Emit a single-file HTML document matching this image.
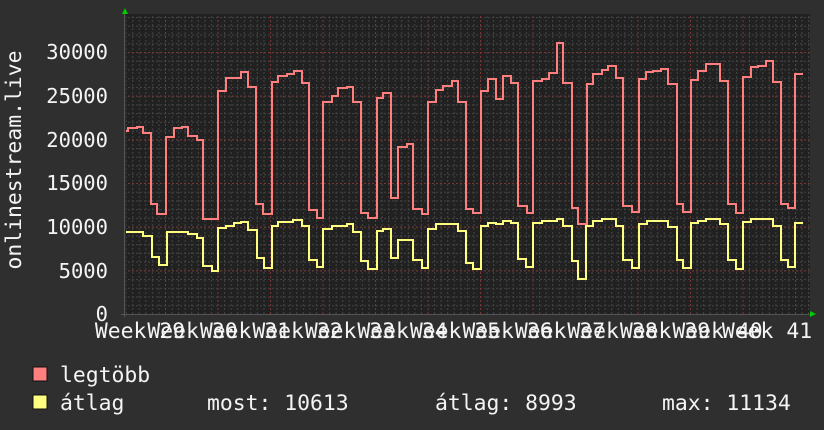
<!DOCTYPE html>
<html><head><meta charset="utf-8"><style>
html,body{margin:0;padding:0;background:#2f2f2f;width:824px;height:430px;overflow:hidden}
svg{display:block}
text{font-family:"DejaVu Sans Mono","Liberation Mono",monospace;font-size:20.5px;fill:#f4f4f4}
text.lg{font-size:21.4px}
</style></head><body>
<svg width="824" height="430" viewBox="0 0 824 430" xmlns="http://www.w3.org/2000/svg">
<defs>
<pattern id="gv" patternUnits="userSpaceOnUse" x="165" y="0" width="6.5625" height="4">
<rect x="0" y="0" width="1" height="2" fill="#444"/></pattern>
<pattern id="gh" patternUnits="userSpaceOnUse" x="0" y="314" width="4" height="8.733">
<rect x="0" y="0" width="2" height="1" fill="#444"/></pattern>
<pattern id="rv" patternUnits="userSpaceOnUse" x="165" y="0" width="52.5" height="4">
<rect x="0" y="0" width="1" height="2" fill="#7a3535"/></pattern>
<pattern id="rh" patternUnits="userSpaceOnUse" x="0" y="314" width="4" height="43.667">
<rect x="0" y="0" width="2" height="1" fill="#7a3535"/></pattern>
</defs>
<rect x="124" y="14" width="686" height="300" fill="#212121"/>
<rect x="124" y="14" width="686" height="300" fill="url(#gv)"/>
<rect x="124" y="14" width="686" height="300" fill="url(#gh)"/>
<rect x="124" y="14" width="686" height="300" fill="url(#rv)"/>
<rect x="124" y="14" width="686" height="300" fill="url(#rh)"/>
<rect x="124" y="14" width="2" height="300" fill="#2c2c2c"/>
<line x1="121" y1="314.5" x2="812" y2="314.5" stroke="#555" stroke-width="1"/>
<line x1="124.5" y1="12" x2="124.5" y2="317" stroke="#555" stroke-width="1"/>
<polygon points="122,14 128,14 125,8" fill="#00cc00"/>
<polygon points="810,311 810,317 816,314" fill="#00cc00"/>

<polyline fill="none" stroke="#ff7f7f" stroke-width="2" points="126,131 128,131 128,128 137,128 137,127 143,127 143,133 151,133 151,204 157,204 157,214 166,214 166,137 174,137 174,128 182,128 182,127 188,127 188,136 197,136 197,140 203,140 203,219 218,219 218,91 226,91 226,78 241,78 241,72 248,72 248,87 256,87 256,204 263,204 263,214 272,214 272,82 278,82 278,76 287,76 287,74 294,74 294,71 302,71 302,83 309,83 309,210 317,210 317,218 323,218 323,102 332,102 332,96 338,96 338,88 347,88 347,87 353,87 353,102 361,102 361,213 368,213 368,218 377,218 377,98 383,98 383,93 391,93 391,198 398,198 398,147 407,147 407,144 413,144 413,209 422,209 422,214 428,214 428,102 436,102 436,90 443,90 443,86 452,86 452,81 458,81 458,102 466,102 466,209 473,209 473,213 481,213 481,91 488,91 488,79 496,79 496,99 503,99 503,76 511,76 511,83 518,83 518,206 527,206 527,213 533,213 533,81 542,81 542,79 549,79 549,73 557,73 557,43 563,43 563,83 572,83 572,208 578,208 578,224 587,224 587,84 593,84 593,74 602,74 602,70 608,70 608,66 616,66 616,78 623,78 623,206 632,206 632,212 639,212 639,79 646,79 646,72 653,72 653,71 661,71 661,69 668,69 668,84 677,84 677,204 683,204 683,212 691,212 691,80 698,80 698,71 706,71 706,64 720,64 720,81 728,81 728,204 736,204 736,213 743,213 743,77 751,77 751,67 758,67 758,66 766,66 766,61 773,61 773,82 781,82 781,204 788,204 788,208 795,208 795,74 803,74"/>
<polyline fill="none" stroke="#ffff7f" stroke-width="2" points="126,232 143,232 143,236 152,236 152,257 159,257 159,265 167,265 167,232 188,232 188,234 197,234 197,238 203,238 203,266 212,266 212,271 218,271 218,228 226,228 226,226 234,226 234,223 241,223 241,222 248,222 248,230 257,230 257,258 264,258 264,268 272,268 272,226 278,226 278,222 293,222 293,220 302,220 302,226 309,226 309,260 317,260 317,267 323,267 323,229 332,229 332,226 347,226 347,224 353,224 353,232 361,232 361,261 368,261 368,269 377,269 377,231 383,231 383,229 391,229 391,258 398,258 398,240 413,240 413,260 422,260 422,268 428,268 428,229 436,229 436,224 458,224 458,231 466,231 466,263 473,263 473,269 481,269 481,226 488,226 488,223 496,223 496,224 503,224 503,221 511,221 511,223 518,223 518,259 526,259 526,267 533,267 533,223 542,223 542,221 557,221 557,219 563,219 563,226 572,226 572,261 578,261 578,279 586,279 586,226 593,226 593,221 602,221 602,219 616,219 616,226 623,226 623,260 632,260 632,268 639,268 639,224 647,224 647,221 668,221 668,227 677,227 677,260 683,260 683,268 691,268 691,223 698,223 698,221 706,221 706,219 720,219 720,224 728,224 728,260 736,260 736,269 743,269 743,222 751,222 751,219 773,219 773,226 781,226 781,260 788,260 788,267 795,267 795,223 803,223"/>

<g text-anchor="end">
<text x="108" y="59">30000</text>
<text x="108" y="103">25000</text>
<text x="108" y="147">20000</text>
<text x="108" y="190">15000</text>
<text x="108" y="234">10000</text>
<text x="108" y="278">5000</text>
<text x="108" y="321">0</text>
</g>
<text class="lg" transform="translate(21,160) rotate(-90)" text-anchor="middle">onlinestream.live</text>
<g text-anchor="middle">
<text class="lg" x="140" y="338">Week 29</text>
<text class="lg" x="192.5" y="338">Week 30</text>
<text class="lg" x="245" y="338">Week 31</text>
<text class="lg" x="297.5" y="338">Week 32</text>
<text class="lg" x="350" y="338">Week 33</text>
<text class="lg" x="402.5" y="338">Week 34</text>
<text class="lg" x="455" y="338">Week 35</text>
<text class="lg" x="507.5" y="338">Week 36</text>
<text class="lg" x="560" y="338">Week 37</text>
<text class="lg" x="612.5" y="338">Week 38</text>
<text class="lg" x="665" y="338">Week 39</text>
<text class="lg" x="717.5" y="338">Week 40</text>
<text class="lg" x="767" y="338">Week 41</text>
</g>
<rect x="33" y="367" width="14" height="14" fill="#ff7f7f" stroke="#111" stroke-width="1"/>
<rect x="33" y="395" width="14" height="14" fill="#ffff7f" stroke="#111" stroke-width="1"/>
<text class="lg" x="60" y="382">legtöbb</text>
<text class="lg" x="60" y="410">átlag</text>
<text class="lg" x="207" y="410">most: 10613</text>
<text class="lg" x="435" y="410">átlag: 8993</text>
<text class="lg" x="662" y="410">max: 11134</text>
</svg>
</body></html>
